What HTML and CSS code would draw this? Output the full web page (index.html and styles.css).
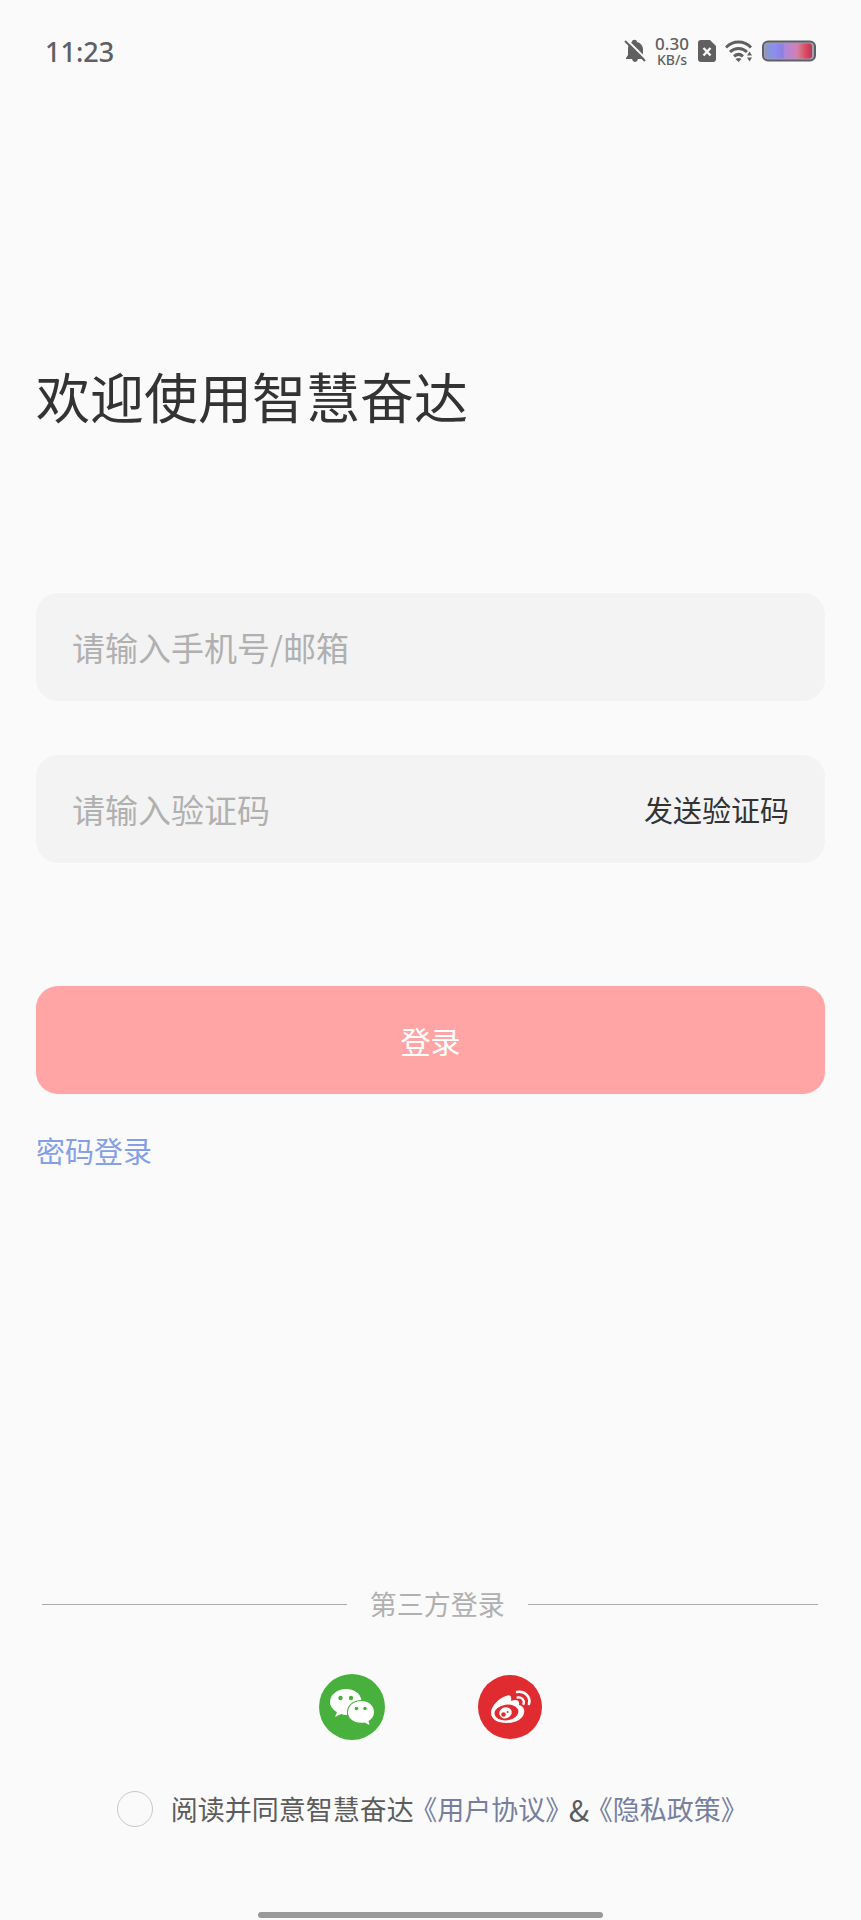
FILE: index.html
```html
<!DOCTYPE html>
<html lang="zh-CN">
<head>
    <meta charset="UTF-8">
    <meta name="viewport" content="width=device-width, initial-scale=1.0">
    <title>登录</title>
    <link rel="stylesheet" href="styles.css">
</head>
<body>
    <header class="status-bar">
        <span class="clock">11:23</span>
        <div class="status-icons">
            <svg width="22" height="24" viewBox="0 0 22 24" aria-hidden="true">
                <path d="M8 3c0-3 5-3 5 0 4 1 6 4 6 8v6l2 3H2v-1l2-3v-6c0-3 1-6 4-7zM8 20h6c-1 4-5 4-6 0z" fill="#606060"/>
                <path d="M3 1l19 19" stroke="#fafafa" stroke-width="2"/>
                <path d="M1 2l20 20" stroke="#606060" stroke-width="2"/>
            </svg>
            <div class="speed">
                <span class="speed-value">0.30</span>
                <span class="speed-unit">KB/s</span>
            </div>
            <svg width="18" height="22" viewBox="0 0 18 22" aria-hidden="true">
                <path d="M3 0h9l6 6v13a3 3 0 0 1-3 3H3a3 3 0 0 1-3-3V3a3 3 0 0 1 3-3z" fill="#606060"/>
                <path d="M5.500 8l7 7.500M12.500 8l-7 7.500" stroke="#fafafa" stroke-width="2.400"/>
            </svg>
            <svg class="wifi" width="28" height="22" viewBox="0 0 28 22" aria-hidden="true">
                <g fill="none" stroke="#606060" stroke-width="3">
                    <path d="M1 7.500C8 .3 19 .3 26 7.500"/>
                    <path d="M5 12c5-4.700 12-4.700 17 0"/>
                    <path d="M9 16.300c3-2.600 6-2.600 9 0"/>
                </g>
                <path d="M10.500 19q3-2 6 0l-3 3zM22 15.500l2.500-4 2.500 4zM22 17.500h5l-2.500 4z" fill="#606060"/>
            </svg>
            <svg width="54" height="22" viewBox="0 0 54 22" aria-hidden="true">
                <defs>
                    <linearGradient id="charge">
                        <stop offset="0" stop-color="#849bc9"/>
                        <stop offset=".2" stop-color="#8c8ff0"/>
                        <stop offset=".38" stop-color="#8b7fe0"/>
                        <stop offset=".42" stop-color="#ad87db"/>
                        <stop offset=".68" stop-color="#d47fb5"/>
                        <stop offset=".76" stop-color="#d6707c"/>
                        <stop offset=".86" stop-color="#dc4868"/>
                        <stop offset="1" stop-color="#b9384f"/>
                    </linearGradient>
                </defs>
                <rect x="1" y="1.500" width="52" height="19" rx="5" fill="#a99dac" stroke="#5d606b" stroke-width="2"/>
                <rect x="3" y="3.500" width="47" height="15" rx="3" fill="url(#charge)"/>
            </svg>
        </div>
    </header>

    <main class="page">
        <h1 class="title">欢迎使用智慧奋达</h1>

        <form class="login-form">
            <div class="field">
                <input class="field-input" type="text" placeholder="请输入手机号/邮箱" aria-label="手机号/邮箱">
            </div>
            <div class="field">
                <input class="field-input" type="text" placeholder="请输入验证码" aria-label="验证码">
                <button class="send-code" type="button">发送验证码</button>
            </div>
            <button class="login-button" type="submit">登录</button>
        </form>
        <a class="password-login" href="#">密码登录</a>

        <section class="third-party">
            <div class="divider">第三方登录</div>
            <div class="socials">
                <a class="social" href="#" aria-label="微信登录">
                    <svg width="66" height="66" viewBox="0 0 66 66">
                        <circle cx="33" cy="33" r="33" fill="#48b03c"/>
                        <path d="M27 15c8 0 14 4 15.500 11C34 26 28 31 28 38v3q-3 0-6-1l-6 3 2-5c-4-2-7-6-7-10 0-7 7-13 16-13z" fill="#fff"/>
                        <path d="M42 27c7.500 0 13 4.500 13 11 0 4-2 7-5.500 9l1 4-5-2.500C36 50 29 45 29 38.500 29 32 34.500 27 42 27z" fill="#fff"/>
                        <g fill="#48b03c">
                            <circle cx="21.500" cy="24" r="2.200"/>
                            <circle cx="32" cy="24" r="2.200"/>
                            <circle cx="37.500" cy="34.500" r="1.800"/>
                            <circle cx="46" cy="34.500" r="1.800"/>
                        </g>
                    </svg>
                </a>
                <a class="social" href="#" aria-label="微博登录">
                    <svg width="64" height="64" viewBox="0 0 64 64">
                        <circle cx="32" cy="32" r="32" fill="#e02c30"/>
                        <path d="M28 21c4-2 6 0 5 5 5-2 9-1 8 4 4 1 6 4 5 8-1 6-8 10-17 10-10 0-16-4-16-10 0-7 8-15 15-17z" fill="#fff"/>
                        <ellipse cx="28.500" cy="37.500" rx="12" ry="7.800" transform="rotate(-7 28.500 37.500)" fill="#e02c30"/>
                        <ellipse cx="27.500" cy="37.800" rx="6.300" ry="5.500" transform="rotate(-18 27.500 37.800)" fill="#fff"/>
                        <circle cx="25.500" cy="39.500" r="2.300" fill="#e02c30"/>
                        <circle cx="29.700" cy="37" r="1" fill="#e02c30"/>
                        <g fill="none" stroke="#fff" stroke-linecap="round">
                            <path d="M39 17c8-1.500 14 5 12 12" stroke-width="2.600"/>
                            <path d="M39.500 22.500c4-.8 7.500 2.500 6 6.500" stroke-width="2.300"/>
                        </g>
                    </svg>
                </a>
            </div>
            <div class="agreement">
                <input class="agree-check" type="checkbox" id="agree">
                <label for="agree">阅读并同意智慧奋达</label>
                <a class="doc-link" href="#">《用户协议》</a>
                <span class="amp">&amp;</span>
                <a class="doc-link" href="#">《隐私政策》</a>
            </div>
        </section>
    </main>

    <div class="home-indicator"></div>
</body>
</html>
```

FILE: styles.css
```css
* {
    margin: 0;
    padding: 0;
    box-sizing: border-box;
}

body {
    display: flex;
    flex-direction: column;
    min-height: 100vh;
    font-family: 'Noto Sans CJK SC', sans-serif;
    background: #fafafa;
    color: #333;
}

input,
button {
    font-family: inherit;
    border: none;
    background: none;
}

a {
    text-decoration: none;
}

svg {
    display: block;
}

.status-bar {
    display: flex;
    justify-content: space-between;
    align-items: center;
    height: 102px;
    padding: 0 45px;
    font-family: 'Noto Sans', sans-serif;
    font-weight: 500;
    color: #606060;
}

.clock {
    font-size: 27px;
}

.status-icons {
    display: flex;
    align-items: center;
}

.speed {
    display: flex;
    flex-direction: column;
    align-items: center;
    width: 36px;
    margin: 0 8px;
}

.speed-value {
    font-size: 17px;
    line-height: 17px;
}

.speed-unit {
    font-size: 14px;
    line-height: 15px;
}

.wifi {
    margin: 0 9px;
}

.page {
    flex: 1;
    display: flex;
    flex-direction: column;
    padding: 254px 36px 0;
}

.title {
    font-size: 54px;
    font-weight: 400;
    line-height: 80px;
}

.login-form {
    display: flex;
    flex-direction: column;
    margin-top: 157px;
}

.field {
    display: flex;
    align-items: center;
    height: 108px;
    margin-bottom: 54px;
    padding: 0 36px;
    border-radius: 22px;
    background: #f3f3f3;
}

.field-input {
    flex: 1;
    min-width: 0;
    height: 100%;
    font-size: 33px;
    color: #333;
    outline: none;
}

.field-input::placeholder {
    color: #b0b0b0;
}

.send-code {
    font-size: 29px;
    color: #333;
}

.login-button {
    height: 108px;
    margin-top: 69px;
    border-radius: 22px;
    background: #ffa5a5;
    font-size: 30px;
    color: #fff;
}

.password-login {
    align-self: flex-start;
    margin-top: 34px;
    font-size: 29px;
    line-height: 44px;
    color: #859fe4;
}

.third-party {
    margin-top: auto;
    padding-bottom: 83px;
}

.divider {
    display: flex;
    align-items: center;
    gap: 23px;
    padding: 0 7px 0 6px;
    font-size: 27px;
    line-height: 40px;
    color: #b0b0b0;
}

.divider::before,
.divider::after {
    content: '';
    flex: 21;
    height: 1px;
    background: #aaa;
}

.divider::after {
    flex: 20;
}

.socials {
    display: flex;
    justify-content: center;
    align-items: center;
    gap: 93px;
    margin-top: 50px;
}

.agreement {
    display: flex;
    justify-content: center;
    align-items: center;
    margin-top: 49px;
    font-size: 27px;
    line-height: 40px;
    color: #5c5c5c;
}

.agree-check {
    appearance: none;
    width: 36px;
    height: 36px;
    margin-right: 18px;
    border: 1px solid #c8c8c8;
    border-radius: 50%;
}

.agree-check:checked {
    background: #ffa5a5;
}

.doc-link {
    margin: 0 10px;
    color: #767f9d;
    font-feature-settings: 'halt';
}

.amp {
    font-size: 30px;
}

.home-indicator {
    align-self: center;
    width: 40%;
    height: 6px;
    margin-bottom: 2px;
    border-radius: 3px;
    background: #999;
}
```
